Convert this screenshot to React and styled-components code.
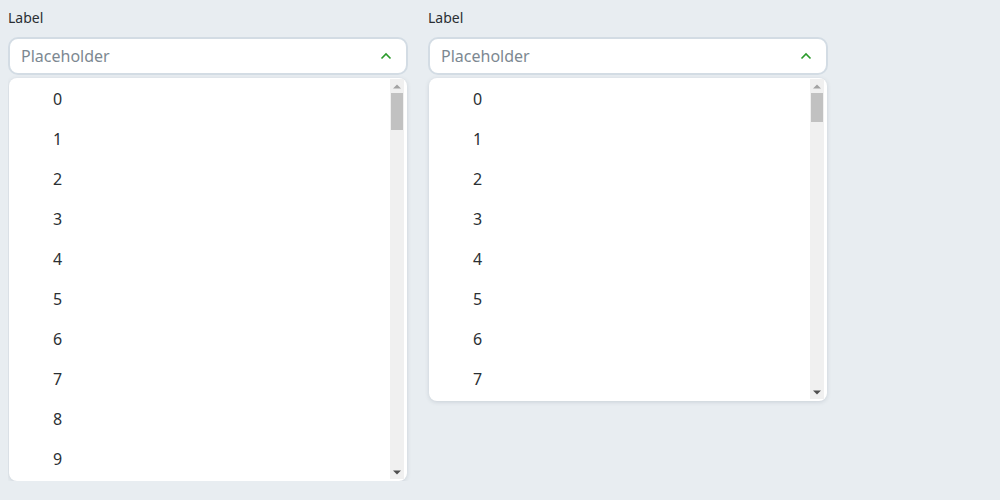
import React from "react";
import styled, { createGlobalStyle } from "styled-components";

const Global = createGlobalStyle`
  body {
    margin: 8px;
    background: #e8edf1;
    font-family: "Noto Sans", "Open Sans", sans-serif;
  }
`;

const Row = styled.div`
  display: flex;
  gap: 20px;
  align-items: flex-start;
`;

const Field = styled.div`
  width: 400px;
  display: flex;
  flex-direction: column;
`;

const Label = styled.label`
  font-size: 14px;
  color: #2b2f33;
  line-height: 18px;
  margin: 1px 0 10px;
`;

const Control = styled.div`
  box-sizing: border-box;
  height: 38px;
  border: 2px solid #d3dce4;
  border-radius: 10px;
  background: #fff;
  display: flex;
  align-items: center;
  justify-content: space-between;
  padding: 0 14px 0 11px;
`;

const Placeholder = styled.span`
  font-size: 16px;
  color: #7d8891;
`;

const Dropdown = styled.div`
  margin: 3px 1px 0 1px;
  background: #fff;
  border-radius: 8px;
  box-shadow: 0 1px 4px rgba(60, 80, 100, 0.18);
  padding: 1px 3px 2px 0;
  display: flex;
`;

const List = styled.ul`
  flex: 1;
  list-style: none;
  margin: 0;
  padding: 0;
  overflow: hidden;
  height: ${(p) => p.$height}px;
`;

const Item = styled.li`
  height: 40px;
  display: flex;
  align-items: center;
  padding-left: 44px;
  font-size: 16px;
  color: #2b2f33;
`;

const Rail = styled.div`
  width: 14px;
  background: #f0f0f0;
  display: flex;
  flex-direction: column;
`;

const RailButton = styled.div`
  height: 14px;
  display: flex;
  align-items: center;
  justify-content: center;
`;

const Track = styled.div`
  flex: 1;
  padding: 0 1px;
`;

const Thumb = styled.div`
  height: ${(p) => p.$size}px;
  background: #c1c1c1;
`;

function Chevron() {
  return (
    <svg width="12" height="8" viewBox="0 0 12 8">
      <path d="M1.5 6.5 L6 2 L10.5 6.5" fill="none" stroke="#2a9a2a" strokeWidth="1.6" />
    </svg>
  );
}

function Arrow({ up }) {
  return (
    <svg width="8" height="5" viewBox="0 0 8 5">
      {up ? (
        <path d="M0 4.5 L4 0.5 L8 4.5 Z" fill="#a3a3a3" />
      ) : (
        <path d="M0 0.5 L8 0.5 L4 4.5 Z" fill="#505050" />
      )}
    </svg>
  );
}

function Select({ height, thumb }) {
  // only the rows that fit in the open list are drawn
  const items = Array.from({ length: Math.floor(height / 40) }, (_, i) => i);
  return (
    <Field>
      <Label>Label</Label>
      <Control>
        <Placeholder>Placeholder</Placeholder>
        <Chevron />
      </Control>
      <Dropdown>
        <List $height={height}>
          {items.map((i) => (
            <Item key={i}>{i}</Item>
          ))}
        </List>
        <Rail>
          <RailButton>
            <Arrow up />
          </RailButton>
          <Track>
            <Thumb $size={thumb} />
          </Track>
          <RailButton>
            <Arrow />
          </RailButton>
        </Rail>
      </Dropdown>
    </Field>
  );
}

export default function App() {
  return (
    <>
      <Global />
      <Row>
        <Select height={400} thumb={37} />
        <Select height={320} thumb={29} />
      </Row>
    </>
  );
}
